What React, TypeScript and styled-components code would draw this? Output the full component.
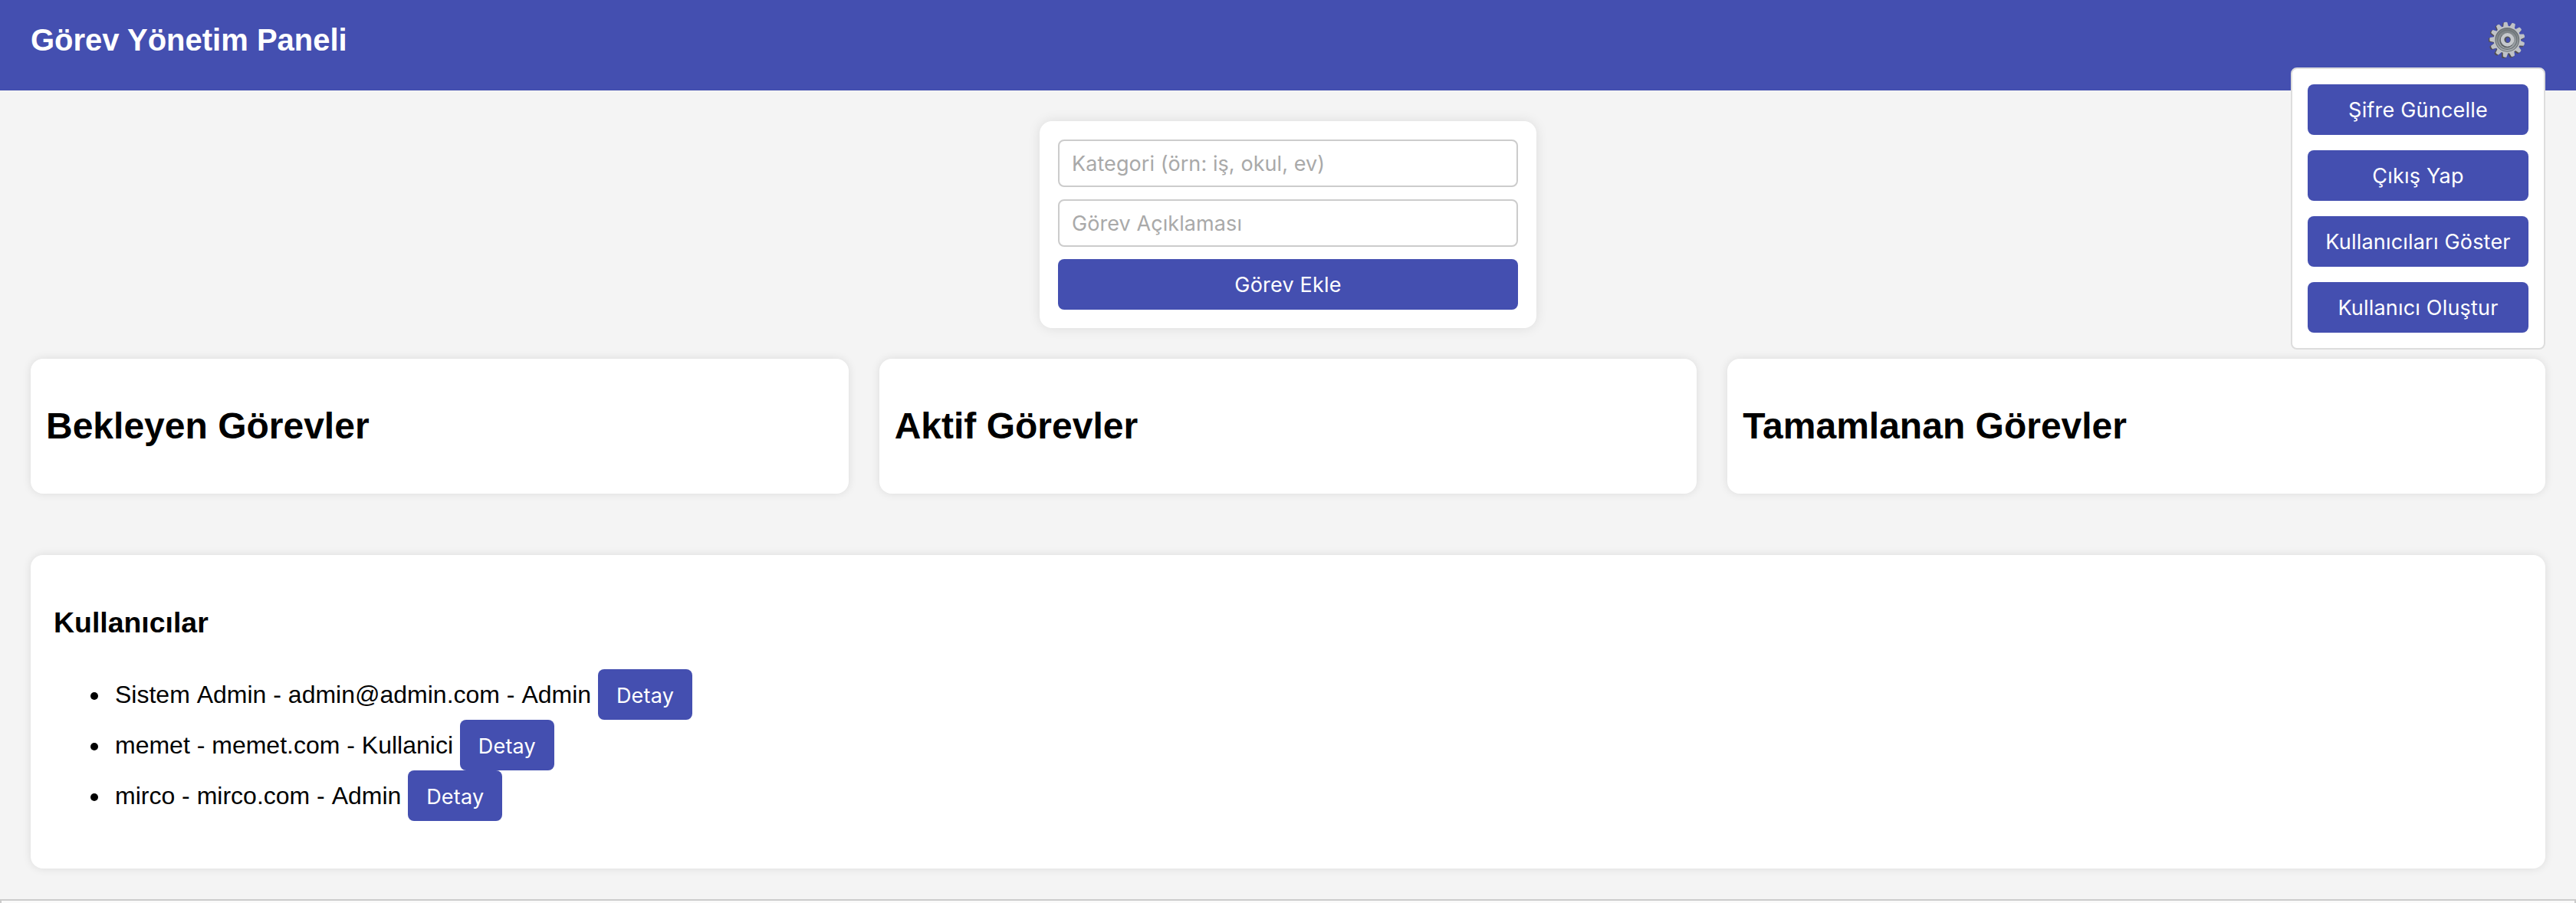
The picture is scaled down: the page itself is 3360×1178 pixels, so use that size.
import React from "react";
import styled, { createGlobalStyle } from "styled-components";

const GlobalStyle = createGlobalStyle`
  *, *::before, *::after { box-sizing: border-box; }
  html { background: #f4f4f4; }
  body {
    margin: 0;
    height: 1178px;
    overflow: hidden;
    background: #f4f4f4;
    color: #000;
    font-family: "Liberation Sans", Arial, sans-serif;
    font-size: 32px;
  }
`;

const Page = styled.div`
  display: flex;
  flex-direction: column;
  height: 1178px;
  overflow: hidden;
`;

const Header = styled.header`
  position: relative;
  display: flex;
  justify-content: space-between;
  flex: none;
  height: 118px;
  padding: 28px 66px 0 40px;
  background: #444fb0;
  color: #fff;
`;

const Title = styled.h1`
  margin: 1px 0 0;
  font-size: 40px;
  line-height: 46px;
  font-weight: bold;
`;

const GearSvg = styled.svg`
  display: block;
  width: 48px;
  height: 48px;
`;

const Menu = styled.div`
  position: absolute;
  top: 88px;
  right: 40px;
  z-index: 2;
  display: flex;
  flex-direction: column;
  gap: 20px;
  width: 332px;
  padding: 20px;
  background: #fff;
  border: 2px solid #ddd;
  border-radius: 8px;
`;

const Button = styled.button`
  height: 66px;
  padding: 2px 20px 0;
  border: 0;
  border-radius: 8px;
  background: #444fb0;
  color: #fff;
  font-family: Inter, sans-serif;
  font-size: 27px;
  line-height: 32px;
  letter-spacing: 0.2px;
  white-space: nowrap;
`;

const DetailButton = styled(Button)`
  width: 123px;
  padding: 4px 0 0;
`;

const Form = styled.form`
  display: flex;
  flex-direction: column;
  flex: none;
  align-self: center;
  gap: 16px;
  width: 648px;
  height: 270px;
  margin-top: 40px;
  padding: 24px;
  background: #fff;
  border-radius: 16px;
  box-shadow: 0 0 16px rgba(0, 0, 0, 0.1);
`;

const Input = styled.input`
  height: 62px;
  padding: 0 16px;
  border: 2px solid #ccc;
  border-radius: 8px;
  background: #fff;
  font-family: Inter, sans-serif;
  font-size: 27px;
  letter-spacing: 0.08px;
  &::placeholder { color: #a9a9a9; opacity: 1; }
`;

const Columns = styled.main`
  display: grid;
  grid-template-columns: repeat(3, 1fr);
  gap: 40px;
  flex: none;
  margin: 40px 40px 0;
`;

const Column = styled.section`
  height: 176px;
  padding: 60px 20px 0;
  background: #fff;
  border-radius: 16px;
  box-shadow: 0 0 12px rgba(0, 0, 0, 0.1);
`;

const ColumnTitle = styled.h2`
  margin: 0;
  font-size: 48px;
  line-height: 56px;
`;

const Users = styled.section`
  flex: none;
  height: 409px;
  margin: 80px 40px 0;
  padding: 66px 30px 0;
  background: #fff;
  border-radius: 16px;
  box-shadow: 0 0 12px rgba(0, 0, 0, 0.1);
`;

const UsersTitle = styled.h3`
  margin: 0;
  font-size: 37.44px;
  line-height: 44px;
`;

const UserList = styled.ul`
  margin: 39px 0 0;
  padding: 0 0 0 80px;
  list-style: none;
  font-kerning: none;
`;

const UserRow = styled.li`
  height: 66px;
  line-height: 66px;
  &::before {
    content: "";
    display: inline-block;
    width: 10px;
    height: 10px;
    margin: 0 22px 0 -32px;
    border-radius: 50%;
    background: #000;
    vertical-align: 4.5px;
  }
`;

const BottomFrame = styled.div`
  flex: none;
  height: 40px;
  margin-top: 40px;
  border: 2px solid #ccc;
  background: #fafafa;
`;

const teeth = Array.from({ length: 13 }, (_, i) => -5 + (i * 360) / 13);

function Gear() {
  return (
    <GearSvg viewBox="0 0 48 48" aria-hidden="true">
      <defs>
        <linearGradient id="dish" x1="0" y1="0" x2="0" y2="1">
          <stop offset="0" stopColor="#777d81" />
          <stop offset="1" stopColor="#a8adb1" />
        </linearGradient>
      </defs>
      <g fill="#514d50" transform="translate(-1 .8)">
        {teeth.map((a) => (
          <path key={a} d="M20.2 9 L21.5 1.2 Q24 -.2 26.5 1.2 L27.8 9Z" transform={`rotate(${a} 24 24)`} />
        ))}
      </g>
      <g fill="#bfc2c7">
        {teeth.map((a) => (
          <path key={a} d="M20.2 9 L21.7 1.2 Q24 0 26.3 1.2 L27.8 9Z" transform={`rotate(${a} 24.3 23.8)`} />
        ))}
        <circle cx="24.3" cy="23.8" r="17.8" />
      </g>
      <circle cx="24.3" cy="23.8" r="15.9" fill="#686e72" />
      <circle cx="24.3" cy="24.1" r="14.8" fill="url(#dish)" />
      <circle cx="24.3" cy="23.8" r="12.6" fill="none" stroke="#6b7276" strokeWidth="1.1" />
      <circle cx="23.8" cy="24.8" r="9.4" fill="#5d6266" />
      <circle cx="24.6" cy="23.9" r="8.8" fill="#c5c8cc" />
      <circle cx="24.6" cy="23.8" r="4.2" fill="#50545b" />
      <ellipse cx="25.2" cy="24.2" rx="2.5" ry="3.3" fill="#444fb0" />
    </GearSvg>
  );
}

const actions = ["Şifre Güncelle", "Çıkış Yap", "Kullanıcıları Göster", "Kullanıcı Oluştur"];
const columns = ["Bekleyen Görevler", "Aktif Görevler", "Tamamlanan Görevler"];
const users = [
  "Sistem Admin - admin@admin.com - Admin",
  "memet - memet.com - Kullanici",
  "mirco - mirco.com - Admin",
];

export default function App() {
  return (
    <Page>
      <GlobalStyle />
      <Header>
        <Title>Görev Yönetim Paneli</Title>
        <Gear />
        <Menu>
          {actions.map((a) => (
            <Button key={a}>{a}</Button>
          ))}
        </Menu>
      </Header>
      <Form>
        <Input placeholder="Kategori (örn: iş, okul, ev)" />
        <Input placeholder="Görev Açıklaması" />
        <Button type="button">Görev Ekle</Button>
      </Form>
      <Columns>
        {columns.map((c) => (
          <Column key={c}>
            <ColumnTitle>{c}</ColumnTitle>
          </Column>
        ))}
      </Columns>
      <Users>
        <UsersTitle>Kullanıcılar</UsersTitle>
        <UserList>
          {users.map((u) => (
            <UserRow key={u}>
              {u} <DetailButton>Detay</DetailButton>
            </UserRow>
          ))}
        </UserList>
      </Users>
      <BottomFrame />
    </Page>
  );
}
